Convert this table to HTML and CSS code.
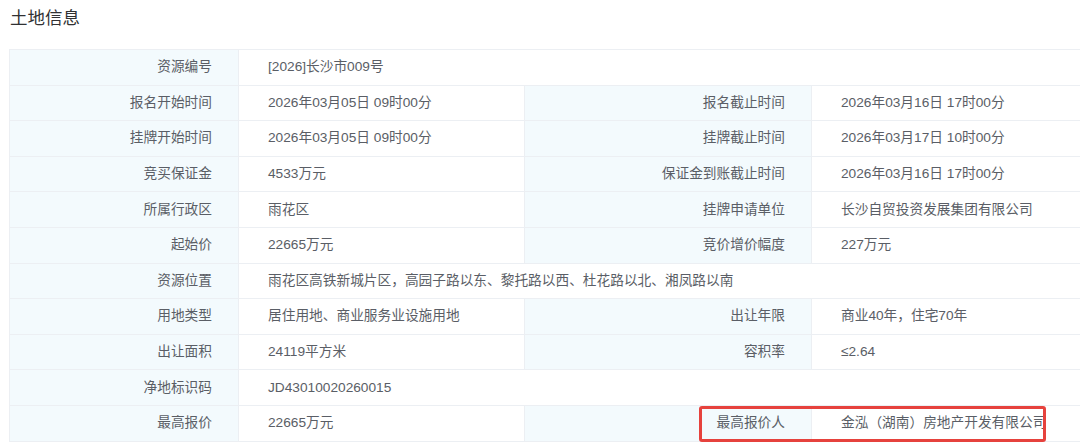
FILE: index.html
```html
<!DOCTYPE html>
<html lang="zh-CN">
<head>
<meta charset="utf-8">
<title>土地信息</title>
<link rel="stylesheet" href="styles.css">
</head>
<body>
<div class="page">
  <h2 class="title">土地信息</h2>
  <div class="sheet">
    <div class="grid">
      <div class="lb">资源编号</div><div class="val span3">[2026]长沙市009号</div>

      <div class="lb">报名开始时间</div><div class="val">2026年03月05日 09时00分</div>
      <div class="lb">报名截止时间</div><div class="val">2026年03月16日 17时00分</div>

      <div class="lb">挂牌开始时间</div><div class="val">2026年03月05日 09时00分</div>
      <div class="lb">挂牌截止时间</div><div class="val">2026年03月17日 10时00分</div>

      <div class="lb">竞买保证金</div><div class="val">4533万元</div>
      <div class="lb">保证金到账截止时间</div><div class="val">2026年03月16日 17时00分</div>

      <div class="lb">所属行政区</div><div class="val">雨花区</div>
      <div class="lb">挂牌申请单位</div><div class="val">长沙自贸投资发展集团有限公司</div>

      <div class="lb">起始价</div><div class="val">22665万元</div>
      <div class="lb">竞价增价幅度</div><div class="val">227万元</div>

      <div class="lb">资源位置</div><div class="val span3">雨花区高铁新城片区，高园子路以东、黎托路以西、杜花路以北、湘凤路以南</div>

      <div class="lb">用地类型</div><div class="val">居住用地、商业服务业设施用地</div>
      <div class="lb">出让年限</div><div class="val">商业40年，住宅70年</div>

      <div class="lb">出让面积</div><div class="val">24119平方米</div>
      <div class="lb">容积率</div><div class="val">≤2.64</div>

      <div class="lb">净地标识码</div><div class="val span3">JD43010020260015</div>

      <div class="lb">最高报价</div><div class="val">22665万元</div>
      <div class="lb">最高报价人</div><div class="val">金泓（湖南）房地产开发有限公司</div>
    </div>
    <div class="mark"></div>
  </div>
</div>
</body>
</html>
```

FILE: styles.css
```css
html, body {
  margin: 0;
  padding: 0;
  background: #ffffff;
  overflow: hidden;
}

.page {
  width: 1080px;
  height: 444px;
  overflow: hidden;
  font-family: "Liberation Sans", "Noto Sans CJK SC", sans-serif;
  color: #5a5e66;
}

.title {
  margin: 0;
  padding: 6px 0 0 10px;
  height: 49px;
  box-sizing: border-box;
  font-family: "Noto Sans CJK SC", sans-serif;
  font-size: 17.5px;
  font-weight: 400;
  line-height: 22px;
  color: #303133;
}

.sheet {
  position: relative;
  margin-left: 9px;
  width: 1110px;
}

.grid {
  display: grid;
  grid-template-columns: 229px 286px 287px 1fr;
  grid-auto-rows: 35.6px;
  border-top: 1px solid #eceff3;
  border-left: 1px solid #eceff3;
}

.lb, .val {
  display: flex;
  align-items: center;
  font-size: 13.7px;
  line-height: 18px;
  border-right: 1px solid #eceff3;
  border-bottom: 1px solid #eceff3;
  white-space: nowrap;
  box-sizing: border-box;
}

.lb {
  justify-content: flex-end;
  padding-right: 26px;
  background: #f3fafd;
}

.val {
  padding-left: 29px;
  background: #ffffff;
}

.span3 {
  grid-column: span 3;
}

.mark {
  position: absolute;
  left: 690px;
  top: 357px;
  width: 347px;
  height: 36px;
  box-sizing: border-box;
  border: 3px solid #e6423d;
  border-radius: 3px;
}
```
